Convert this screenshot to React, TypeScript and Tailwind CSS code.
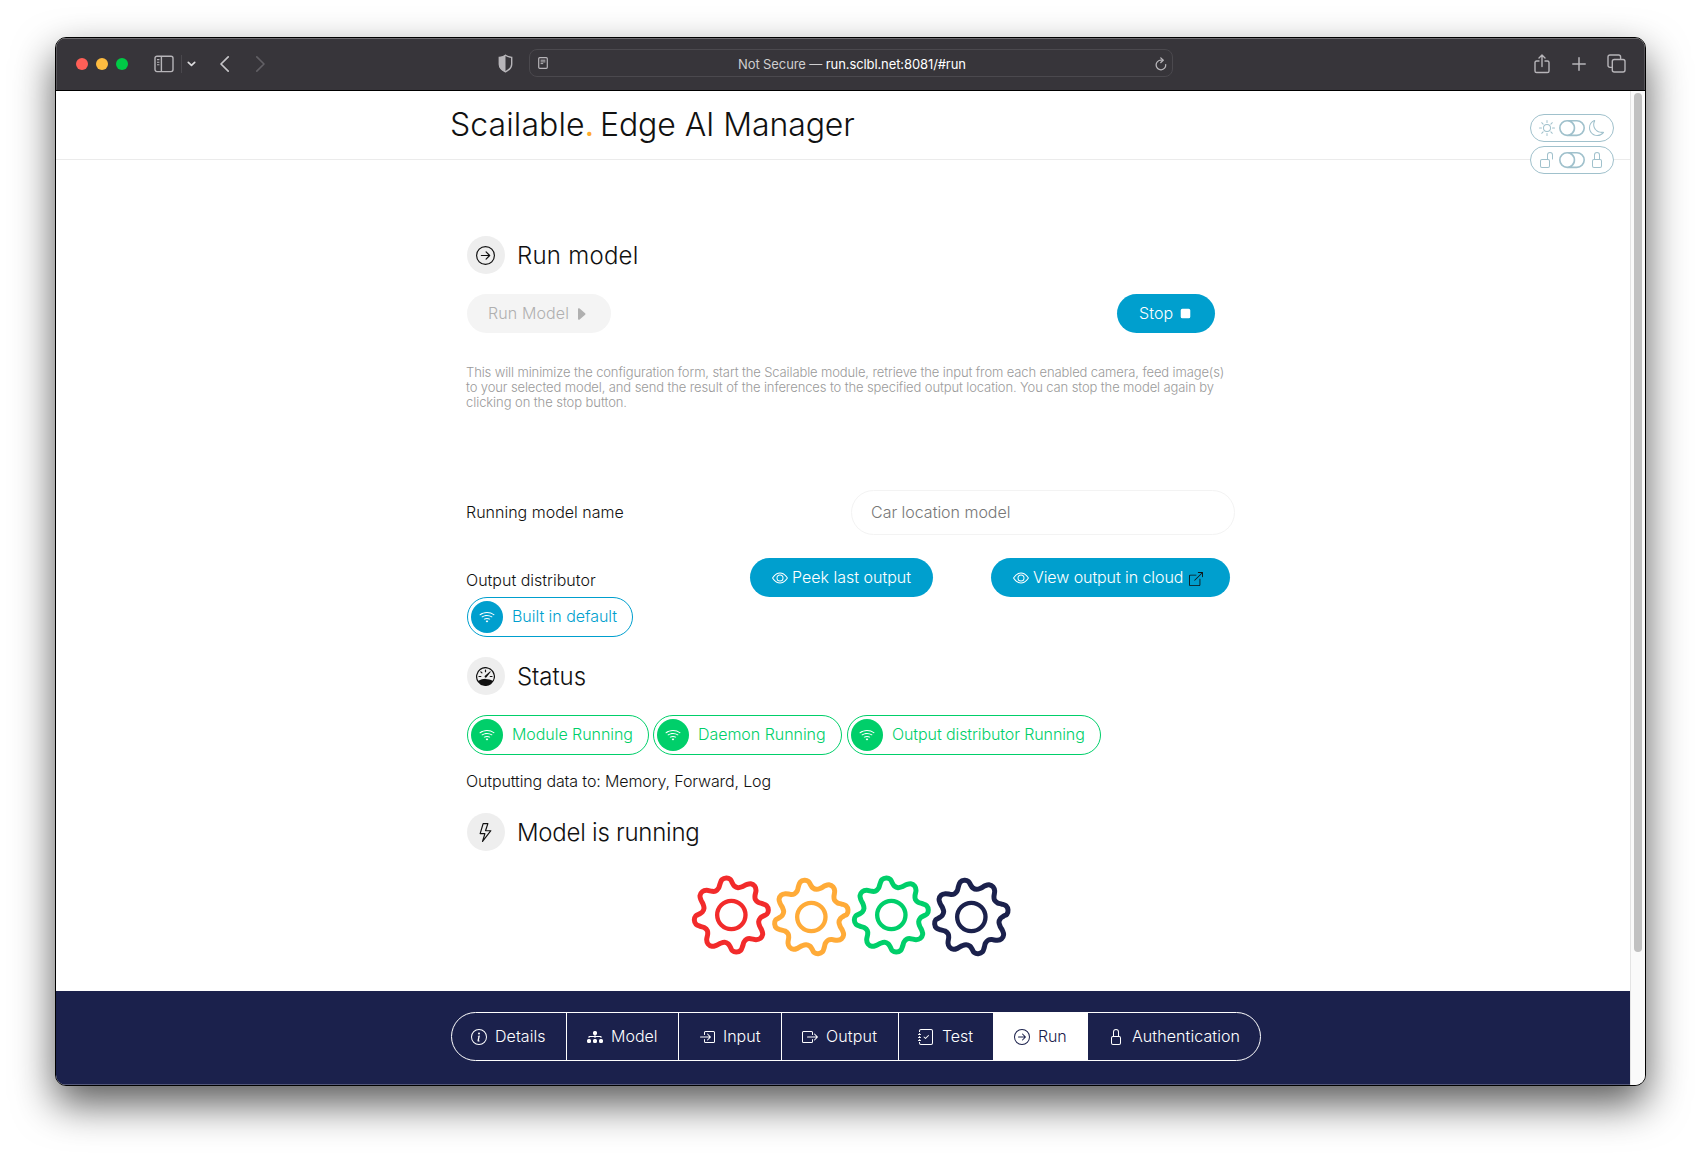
import React from "react";
import {
  BsArrowRightCircle,
  BsBoxArrowInRight,
  BsBoxArrowRight,
  BsBoxArrowUpRight,
  BsCaretRightFill,
  BsDiagram3Fill,
  BsEye,
  BsInfoCircle,
  BsJournalCheck,
  BsLightning,
  BsLock,
  BsMoon,
  BsSpeedometer,
  BsStopFill,
  BsSun,
  BsToggleOff,
  BsUnlock,
  BsWifi,
} from "react-icons/bs";

type Pt = [number, number];

// One quarter of the gear outline; the other three are rotations of it.
const QUARTER: Pt[] = [
  [-34, -93], [-28, -106], [-15, -111], [-3, -107], [3, -96], [9, -87], [20, -82], [33, -85], [45, -91], [58, -94], [70, -87], [74, -74], [71, -58], [72, -47], [81, -38],
];

function gearPath(): string {
  let pts: Pt[] = [];
  let q = QUARTER;
  for (let i = 0; i < 4; i++) {
    pts = pts.concat(q);
    q = q.map(([x, y]) => [-y, x] as Pt);
  }
  const n = pts.length;
  let d = `M${pts[0][0]} ${pts[0][1]}`;
  for (let i = 0; i < n; i++) {
    const a = pts[(i + n - 1) % n], b = pts[i], c = pts[(i + 1) % n], e = pts[(i + 2) % n];
    d += `C${b[0] + (c[0] - a[0]) / 6} ${b[1] + (c[1] - a[1]) / 6} ${c[0] - (e[0] - b[0]) / 6} ${c[1] - (e[1] - b[1]) / 6} ${c[0]} ${c[1]}`;
  }
  return d + "Z";
}

const GEAR = gearPath();

function Gear({ color, turn = 0, className = "" }: { color: string; turn?: number; className?: string }) {
  return (
    <svg viewBox="-118 -120 240 240" className={`size-20 overflow-visible ${className}`} fill="none" stroke={color} strokeWidth="15">
      <path d={GEAR} transform={`rotate(${turn})`} />
      <circle r="42.5" strokeWidth="13" />
    </svg>
  );
}

function Heading({ icon, children, className = "" }: { icon: React.ReactNode; children: React.ReactNode; className?: string }) {
  return (
    <div className={`flex h-[38px] items-center ${className}`}>
      <span className="mr-3 flex size-[38px] items-center justify-center rounded-full bg-[#eeeeee] pr-0.5 text-[19px]">{icon}</span>
      {children}
    </div>
  );
}

function Label({ children }: { children: React.ReactNode }) {
  return <span className="mb-0.5">{children}</span>;
}

function Pill({ className, dot, children }: { className: string; dot: string; children: React.ReactNode }) {
  return (
    <div className={`flex h-10 items-center rounded-full border pl-[3px] ${className}`}>
      <span className={`mr-[9px] flex size-8 items-center justify-center rounded-full pr-px text-base text-white ${dot}`}>
        <BsWifi />
      </span>
      <Label>{children}</Label>
    </div>
  );
}

function Toolbar() {
  return (
    <div className="flex h-[53px] shrink-0 items-center border-b border-black bg-[#37353a] font-[Inter] font-normal text-[#b7b5b9] shadow-[inset_0_1px_0_#6d6b6f,inset_1px_0_0_#57555a,inset_-1px_0_0_#57555a]">
      <div className="ml-5 flex gap-2">
        <span className="size-3 rounded-full bg-[#ff5f57]" />
        <span className="size-3 rounded-full bg-[#febc40]" />
        <span className="size-3 rounded-full bg-[#00ca46]" />
      </div>
      <svg className="ml-[26px] h-[18px] w-5" viewBox="0 0 20 18" fill="none" stroke="currentColor" strokeWidth="1.4">
        <rect x="1" y="1.2" width="18" height="15.4" rx="2" />
        <path d="M7.4 1.2v15.4" />
        <path d="M3 4.6h2.4M3 7.2h2.4M3 9.8h2.4" strokeWidth="1.1" />
      </svg>
      <span className="ml-[7px] h-[18px] w-px bg-[#4a484d]" />
      <svg className="ml-[5px] h-2 w-[9px]" viewBox="0 0 9 8" fill="none" stroke="#dcdbdd" strokeWidth="1.7" strokeLinecap="round" strokeLinejoin="round">
        <path d="M1.3 2.4 4.5 5.4 7.7 2.4" />
      </svg>
      <svg className="ml-[23px] h-4 w-[11px]" viewBox="0 0 11 16" fill="none" stroke="#c6c5c8" strokeWidth="1.7" strokeLinecap="round" strokeLinejoin="round">
        <path d="M9.2.9 2 8l7.2 7.1" />
      </svg>
      <svg className="ml-[25px] h-4 w-[11px]" viewBox="0 0 11 16" fill="none" stroke="#626065" strokeWidth="1.6" strokeLinecap="round" strokeLinejoin="round">
        <path d="M1.8.9 9 8l-7.2 7.1" />
      </svg>
      <svg className="mb-px ml-[232px] h-[19px] w-[15px]" viewBox="0 0 15 19">
        <path d="M7.5 1.2c2 1.400 3.800 2 6.200 2.200v6.800c0 3.400-2.600 5.800-6.200 7.600-3.600-1.800-6.200-4.200-6.200-7.600V3.400c2.400-.2 4.200-.8 6.200-2.200z" fill="none" stroke="currentColor" strokeWidth="1.4" />
        <path d="M7.500 1v17C3.700 16 1 13.700 1 10.200V3.300C3.500 3 5.500 2.400 7.500 1z" fill="currentColor" />
      </svg>
      <div className="mb-0.5 ml-4 flex h-7 w-[644px] items-center rounded-lg border border-[#4b494e] pr-[5px] pl-2">
        <svg className="h-3 w-[10px]" viewBox="0 0 10 12" fill="none" stroke="currentColor" strokeWidth="1.2">
          <rect x=".7" y=".7" width="8.600" height="10.600" rx="1" />
          <path d="M2.600 3.200h4.800M2.600 4.900h4.800M2.600 6.600h2.600" strokeWidth="1" />
        </svg>
        <span className="mt-0.5 ml-[190px] text-[13px] tracking-[-0.1px] whitespace-pre text-[#cfcecf]">
          Not Secure — <span className="text-white">run.sclbl.net:8081/#run</span>
        </span>
        <svg className="mt-0.5 ml-auto h-[14px] w-3" viewBox="0 0 12 14" fill="none" stroke="currentColor" strokeWidth="1.3" strokeLinecap="round" strokeLinejoin="round">
          <path d="M10.700 7.600A4.800 4.800 0 1 1 6 3.200h1.800" />
          <path d="M5.800.9 8.200 3.200 5.800 5.500" />
        </svg>
      </div>
      <svg className="mb-px ml-[361px] h-5 w-4" viewBox="0 0 16 20" fill="none" stroke="currentColor" strokeWidth="1.400" strokeLinecap="round" strokeLinejoin="round">
        <path d="M5 7H2.600C1.600 7 1 7.600 1 8.600v8.300c0 1 .6 1.600 1.600 1.600h10.800c1 0 1.600-.6 1.600-1.600V8.600C15 7.600 14.400 7 13.400 7H11M8 12.500V1.300M5 4l3-2.900L11 4" />
      </svg>
      <svg className="ml-[22px] size-[14px]" viewBox="0 0 14 14" stroke="currentColor" strokeWidth="1.500" strokeLinecap="round">
        <path d="M7 .8v12.400M.8 7h12.400" />
      </svg>
      <svg className="mb-px ml-[21px] size-[19px]" viewBox="0 0 19 19" fill="none" stroke="currentColor" strokeWidth="1.400" strokeLinejoin="round">
        <rect x="5.300" y="5.500" width="12.700" height="12.500" rx="2" />
        <path d="M5.300 13.400H3c-1.200 0-2-.8-2-2V3c0-1.200.8-2 2-2h8.600c1.200 0 2 .8 2 2v2.500" />
      </svg>
    </div>
  );
}

function Switch({ left, right }: { left: React.ReactNode; right: React.ReactNode }) {
  return (
    <div className="flex h-7 w-[84px] items-center rounded-full border border-[#a0c1cc] bg-white pl-2 text-base">
      {left}
      <BsToggleOff className="mx-1 text-[26px]" />
      {right}
    </div>
  );
}

export default function App() {
  return (
    <div className="h-[1159px] w-[1701px] overflow-hidden bg-white pt-[37px] pl-[55px]">
      <div className="flex h-[1049px] w-[1591px] flex-col overflow-hidden rounded-[11px] border border-black bg-white font-[Inter,sans-serif] text-base leading-6 font-light text-[#111] shadow-[0_18px_40px_rgba(0,0,0,0.65)]">
        <Toolbar />
        <div className="flex min-h-0 flex-1">
          <div className="relative flex flex-1 flex-col whitespace-nowrap">
            <header className="flex h-[69px] items-center border-b border-[#ebebeb] pl-[394px] text-[32px]">
              <span className="w-[150px] tracking-[0.1px]">
                Scailable<span className="font-normal text-[#ffab2e]">.</span>
              </span>
              <span className="tracking-[-0.1px]">Edge AI Manager</span>
            </header>
            <div className="absolute top-[23px] right-4 flex flex-col gap-1 text-[#a0c1cc]">
              <Switch left={<BsSun />} right={<BsMoon />} />
              <Switch left={<BsUnlock />} right={<BsLock />} />
            </div>

            <main className="flex-1 pt-[76px] pl-[411px]">
              <div className="w-[768px]">
                <Heading icon={<BsArrowRightCircle />}>
                  <span className="mt-0.5 text-2xl tracking-[0.25px]">Run model</span>
                </Heading>
                <div className="mt-5 flex justify-between pr-5">
                  <button className="flex h-[39px] w-36 items-center rounded-full bg-[#f4f4f4] pl-[21px] tracking-[0.11px] text-[#b0b0b0]">
                    <Label>Run Model</Label>
                    <BsCaretRightFill className="ml-1" />
                  </button>
                  <button className="flex h-[39px] w-[98px] items-center rounded-full bg-[#009fce] pl-[22px] tracking-[0.1px] text-white">
                    <Label>Stop</Label>
                    <BsStopFill className="ml-1 text-[17px]" />
                  </button>
                </div>
                <p className="mt-8 -ml-px text-[13px] leading-[15px] text-[#9a9a9a]">
                  <span className="block tracking-[-0.12px]">This will minimize the configuration form, start the Scailable module, retrieve the input from each enabled camera, feed image(s)</span>
                  <span className="block tracking-[-0.11px]">to your selected model, and send the result of the inferences to the specified output location. You can stop the model again by</span>
                  <span className="block tracking-[-0.07px]">clicking on the stop button.</span>
                </p>

                <div className="mt-20 flex items-center">
                  <span className="mb-0.5 -ml-px w-[385px]">Running model name</span>
                  <div className="flex h-[45px] w-96 items-center rounded-full border border-[#f3f3f3] pl-[19px] tracking-[-0.02px] text-[#777]">
                    <Label>Car location model</Label>
                  </div>
                </div>

                <div className="mt-[23px] flex items-start">
                  <div className="w-[283px] pt-[10px]">
                    <div className="-ml-px">Output distributor</div>
                    <Pill className="mt-[5px] w-[166px] border-[#009fce] tracking-[-0.04px] text-[#009fce]" dot="bg-[#009fce]">Built in default</Pill>
                  </div>
                  <button className="flex h-[39px] w-[183px] items-center rounded-full bg-[#009fce] pl-[22px] text-white">
                    <BsEye className="mr-1" />
                    <Label>Peek last output</Label>
                  </button>
                  <button className="ml-[58px] flex h-[39px] w-[239px] items-center rounded-full bg-[#009fce] pl-[22px] tracking-[-0.08px] text-white">
                    <BsEye className="mr-1" />
                    <Label>View output in cloud</Label>
                    <BsBoxArrowUpRight className="mt-0.5 ml-1.5 text-sm text-[#111]" />
                  </button>
                </div>

                <Heading className="mt-5" icon={<BsSpeedometer />}>
                  <span className="mt-0.5 text-2xl tracking-[-0.06px]">Status</span>
                </Heading>
                <div className="mt-5 flex text-[#00cf6a]">
                  <Pill className="w-[182px] border-[#00cf6a] tracking-[-0.05px]" dot="bg-[#00cf6a]">Module Running</Pill>
                  <Pill className="ml-1 w-[189px] border-[#00cf6a] tracking-[-0.04px]" dot="bg-[#00cf6a]">Daemon Running</Pill>
                  <Pill className="ml-[5px] w-[254px] border-[#00cf6a] tracking-[-0.1px]" dot="bg-[#00cf6a]">Output distributor Running</Pill>
                </div>
                <div className="mt-[14px] -ml-px tracking-[-0.13px]">Outputting data to: Memory, Forward, Log</div>
                <Heading className="mt-5" icon={<BsLightning />}>
                  <span className="mt-0.5 text-2xl tracking-[-0.25px]">Model is running</span>
                </Heading>
                <div className="mt-6 flex pl-[225px]">
                  <Gear color="#f22b2b" />
                  <Gear color="#ffab38" turn={-3} className="mt-0.5" />
                  <Gear color="#00cf6a" />
                  <Gear color="#1b214c" turn={-3} className="mt-0.5" />
                </div>
              </div>
            </main>

            <footer className="h-[94px] shrink-0 border-b border-[#55597b] bg-[#1b214c] pt-[21px] pl-[395px] text-white">
              <nav className="flex h-[49px] w-[810px] overflow-hidden rounded-full border border-white">
                <a className="flex w-[115px] items-center gap-2 border-r border-white pl-[19px] tracking-[0.05px]"><BsInfoCircle /><Label>Details</Label></a>
                <a className="flex w-[112px] items-center gap-2 border-r border-white pl-5"><BsDiagram3Fill /><Label>Model</Label></a>
                <a className="flex w-[103px] items-center gap-2 border-r border-white pl-5"><BsBoxArrowInRight /><Label>Input</Label></a>
                <a className="flex w-[117px] items-center gap-2 border-r border-white pl-5 tracking-[0.15px]"><BsBoxArrowRight /><Label>Output</Label></a>
                <a className="flex w-[94px] items-center gap-2 pl-[19px] tracking-[-0.05px]"><BsJournalCheck /><Label>Test</Label></a>
                <a className="flex w-[95px] items-center gap-2 bg-white pl-[21px] tracking-[-0.2px] text-[#1b214c]"><BsArrowRightCircle /><Label>Run</Label></a>
                <a className="flex flex-1 items-center gap-2 pl-5 tracking-[0.08px]"><BsLock /><Label>Authentication</Label></a>
              </nav>
            </footer>
          </div>
          <div className="w-[15px] border-l border-[#e4e4e4] bg-[#fafafa] pt-0.5 pl-[3px]">
            <div className="h-[859px] w-2 rounded-full bg-[#c1c1c1]" />
          </div>
        </div>
      </div>
    </div>
  );
}
